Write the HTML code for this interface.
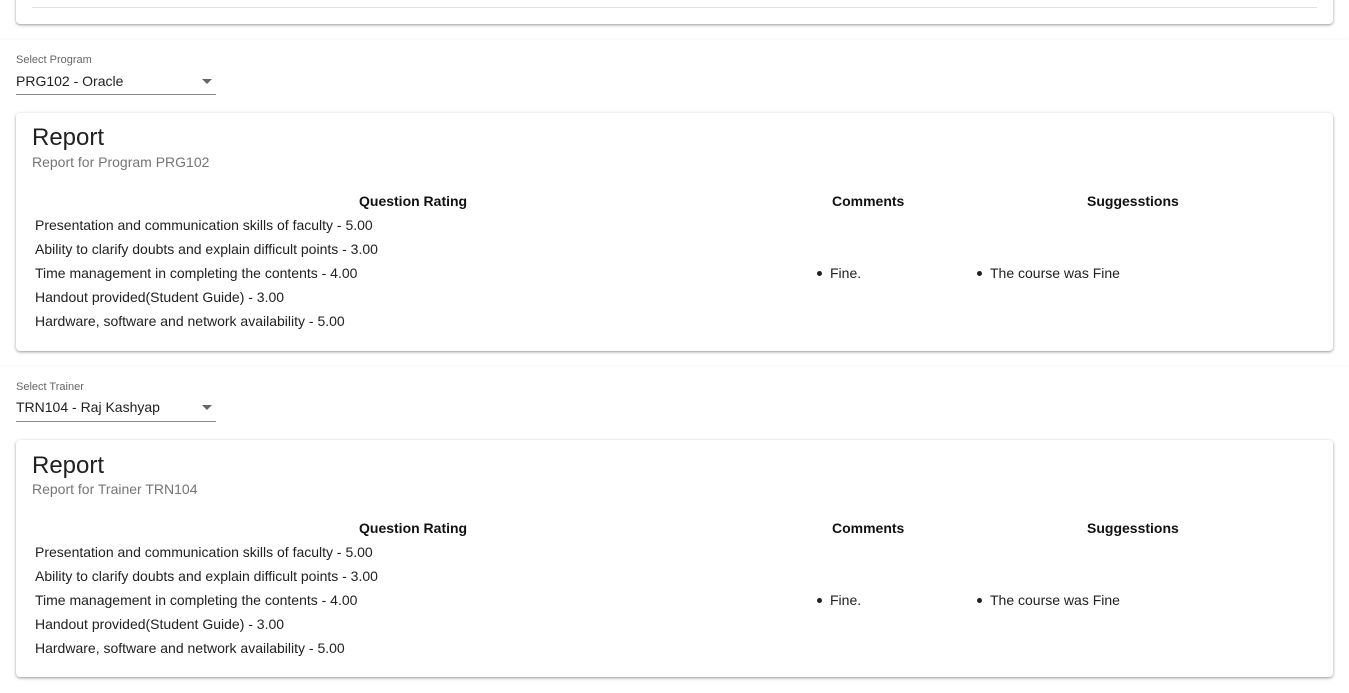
<!DOCTYPE html>
<html><head><meta charset="utf-8"><style>
*{box-sizing:border-box;margin:0;padding:0}
body{width:1349px;height:693px;overflow:hidden;background:#fff;font-family:"Liberation Sans",sans-serif;color:#212121;position:relative}
.abs{position:absolute;white-space:nowrap}
.card{position:absolute;left:16px;width:1317px;background:#fff;border-radius:4px;box-shadow:0 1px 3px rgba(0,0,0,.35),0 1px 1px rgba(0,0,0,.08)}
.sec{position:absolute;left:0;width:1349px;box-shadow:0 -1px 2px rgba(0,0,0,.06)}
.lbl{font-size:11px;color:#666}
.val{font-size:14px;color:#212121}
.ul{position:absolute;left:16px;width:200px;height:1px;background:#8a8a8a}
.arr{position:absolute;width:0;height:0;border-left:5px solid transparent;border-right:5px solid transparent;border-top:5px solid #666}
.h1{font-size:24px;color:#212121}
.sub{font-size:14px;color:#757575}
.th{font-size:14px;font-weight:bold;color:#111}
.td{font-size:14px;color:#212121}
.dot{position:absolute;width:5px;height:5px;border-radius:50%;background:#212121}
</style></head><body>
<div class="card" style="top:-10px;height:34px"></div>
<div class="abs" style="left:32px;top:7px;width:1285px;height:1px;background:#e0e0e0"></div>
<div class="sec" style="top:40px;height:1px"></div>
<div class="sec" style="top:367px;height:1px"></div>

<div class="abs lbl" style="left:16px;top:54px">Select Program</div>
<div class="abs val" style="left:16px;top:73px">PRG102 - Oracle</div>
<div class="arr" style="left:202px;top:79px"></div>
<div class="ul" style="top:94px"></div>
<div class="card" style="top:113px;height:238px"></div>
<div class="abs h1" style="left:32px;top:124px">Report</div>
<div class="abs sub" style="left:32px;top:154px">Report for Program PRG102</div>
<div class="abs th" style="left:359px;top:193px">Question Rating</div>
<div class="abs th" style="left:832px;top:193px">Comments</div>
<div class="abs th" style="left:1087px;top:193px">Suggesstions</div>
<div class="abs td" style="left:35px;top:217px">Presentation and communication skills of faculty - 5.00</div>
<div class="abs td" style="left:35px;top:241px">Ability to clarify doubts and explain difficult points - 3.00</div>
<div class="abs td" style="left:35px;top:265px">Time management in completing the contents - 4.00</div>
<div class="abs td" style="left:35px;top:289px">Handout provided(Student Guide) - 3.00</div>
<div class="abs td" style="left:35px;top:313px">Hardware, software and network availability - 5.00</div>
<div class="dot" style="left:817px;top:271px"></div>
<div class="abs td" style="left:830px;top:265px">Fine.</div>
<div class="dot" style="left:977px;top:271px"></div>
<div class="abs td" style="left:990px;top:265px">The course was Fine</div>

<div class="abs lbl" style="left:16px;top:381px">Select Trainer</div>
<div class="abs val" style="left:16px;top:399px">TRN104 - Raj Kashyap</div>
<div class="arr" style="left:202px;top:405px"></div>
<div class="ul" style="top:421px"></div>
<div class="card" style="top:440px;height:237px"></div>
<div class="abs h1" style="left:32px;top:452px">Report</div>
<div class="abs sub" style="left:32px;top:481px">Report for Trainer TRN104</div>
<div class="abs th" style="left:359px;top:520px">Question Rating</div>
<div class="abs th" style="left:832px;top:520px">Comments</div>
<div class="abs th" style="left:1087px;top:520px">Suggesstions</div>
<div class="abs td" style="left:35px;top:544px">Presentation and communication skills of faculty - 5.00</div>
<div class="abs td" style="left:35px;top:568px">Ability to clarify doubts and explain difficult points - 3.00</div>
<div class="abs td" style="left:35px;top:592px">Time management in completing the contents - 4.00</div>
<div class="abs td" style="left:35px;top:616px">Handout provided(Student Guide) - 3.00</div>
<div class="abs td" style="left:35px;top:640px">Hardware, software and network availability - 5.00</div>
<div class="dot" style="left:817px;top:598px"></div>
<div class="abs td" style="left:830px;top:592px">Fine.</div>
<div class="dot" style="left:977px;top:598px"></div>
<div class="abs td" style="left:990px;top:592px">The course was Fine</div>
</body></html>
